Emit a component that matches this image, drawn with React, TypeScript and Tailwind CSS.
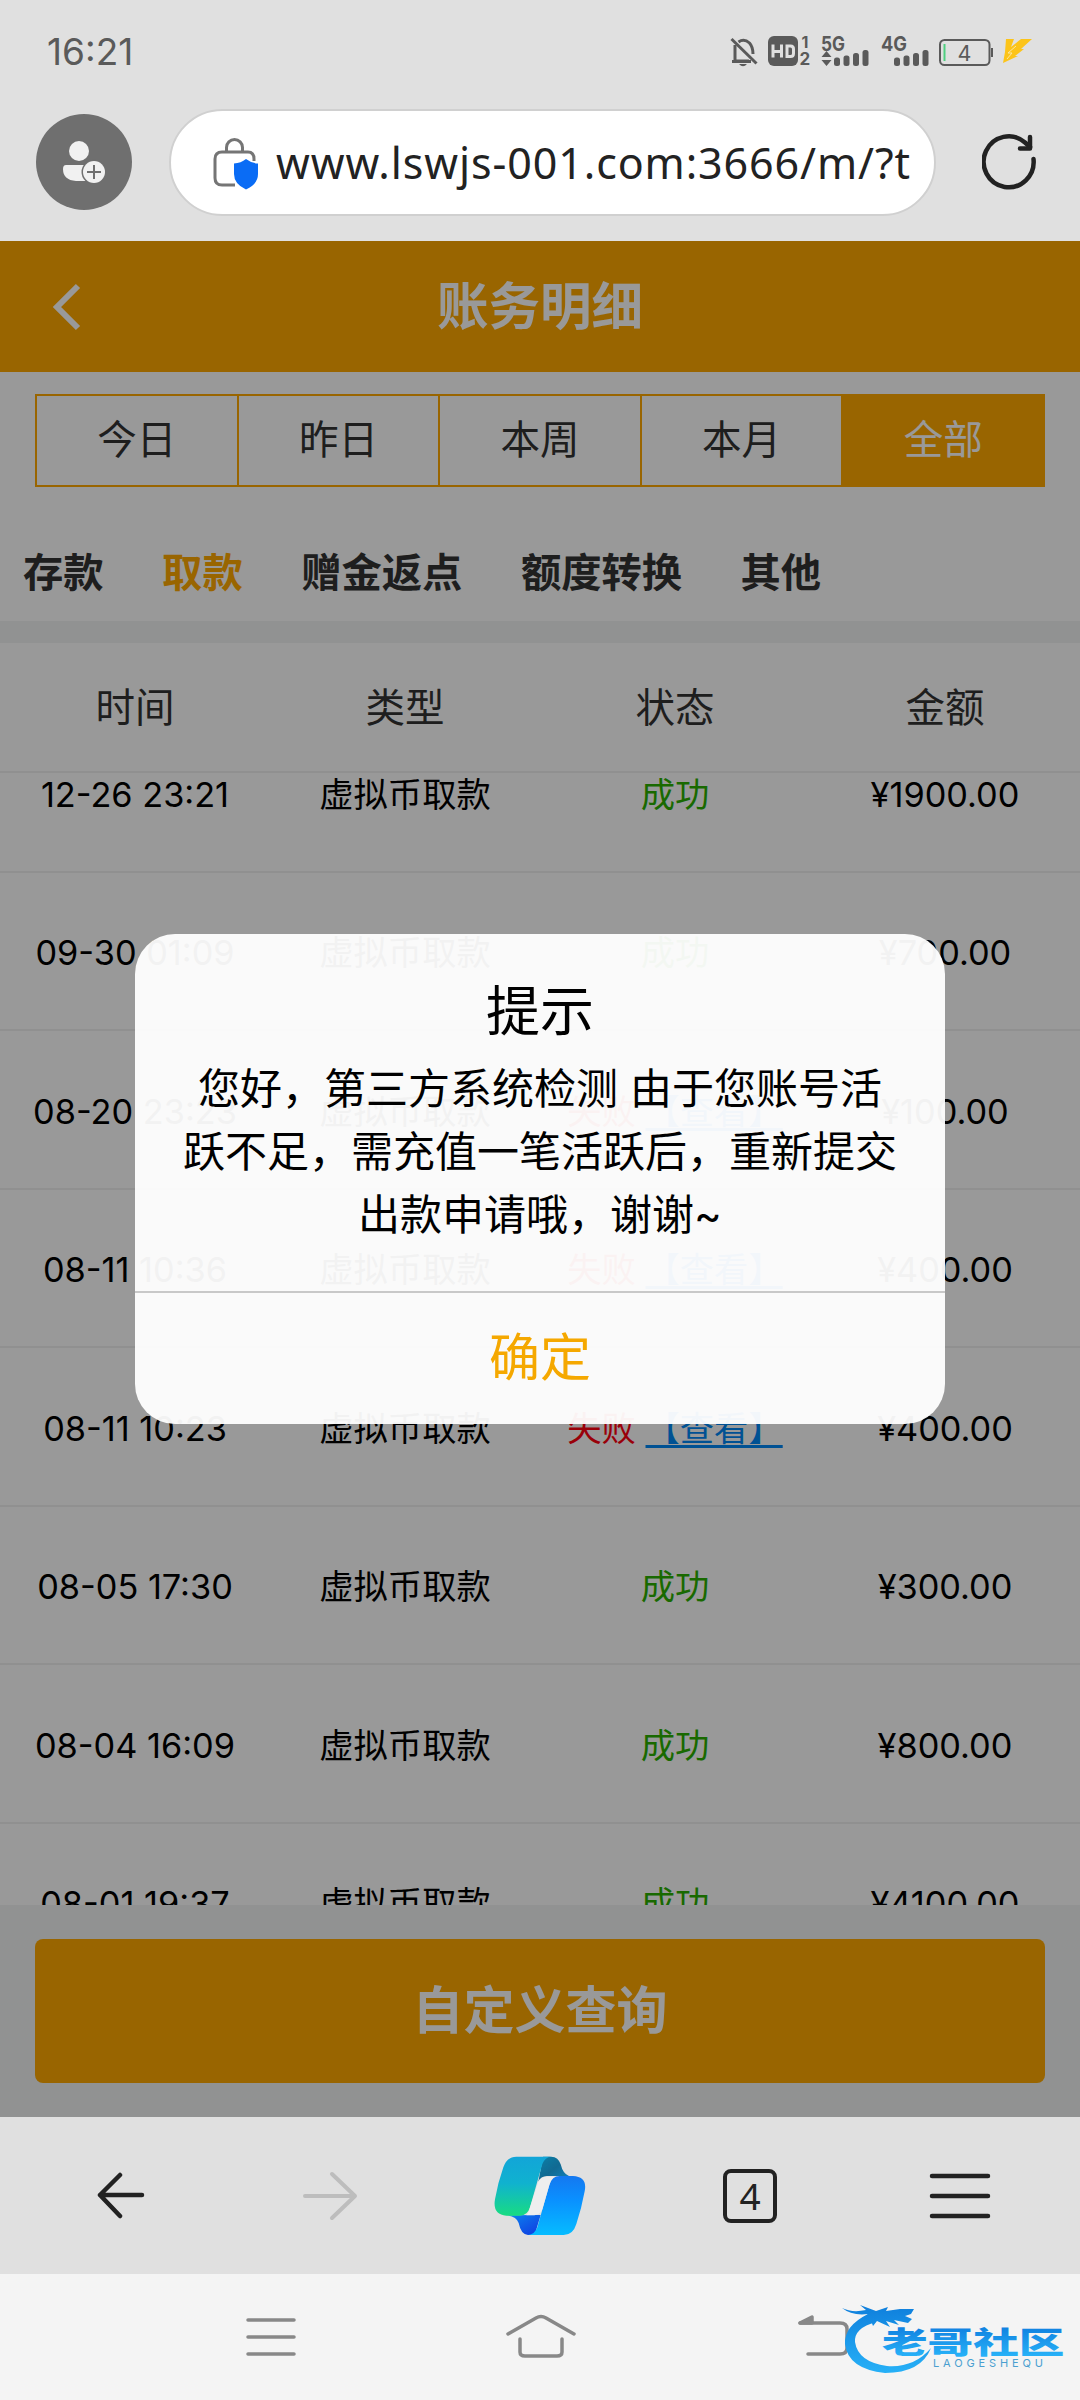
const periods = ['今日', '昨日', '本周', '本月', '全部'];
const categories = ['存款', '取款', '赠金返点', '额度转换', '其他'];
const columns = ['时间', '类型', '状态', '金额'];

type RecordRow = { time: string; ok: boolean; amount: string };

const records: RecordRow[] = [
  { time: '12-26 23:21', ok: true, amount: '¥1900.00' },
  { time: '09-30 01:09', ok: true, amount: '¥700.00' },
  { time: '08-20 23:23', ok: false, amount: '¥100.00' },
  { time: '08-11 10:36', ok: false, amount: '¥400.00' },
  { time: '08-11 10:23', ok: false, amount: '¥400.00' },
  { time: '08-05 17:30', ok: true, amount: '¥300.00' },
  { time: '08-04 16:09', ok: true, amount: '¥800.00' },
  { time: '08-01 19:37', ok: true, amount: '¥4100.00' },
];

function StatusIcons() {
  return (
    <svg width="310" height="40" viewBox="725 32 310 40" fill="#5a5a5a">
      {/* Muted bell */}
      <g fill="none" stroke="#5a5a5a" strokeWidth="3">
        <path d="M731.5 39 756.500 63.5" />
        <path d="M735 45V61H749M732 61.500H751M738.500 42Q744 38 749.500 43Q753 47 753 54" />
      </g>
      <path d="M739 64h8q-4 4.500-8 0z" />
      {/* HD badge */}
      <rect x="768" y="36" width="30" height="30" rx="6" />
      <path d="M773 44.500v13M781.500 44.500v13M773 51.500h8.500M787 46v10.500h3.500q3 0 3-3v-4.500q0-3-3-3z" fill="none" stroke="#e0e0e0" strokeWidth="3" />
      <g fontFamily="Inter, sans-serif" fontWeight="700">
        <text x="801.500" y="47.500" fontSize="16">1</text>
        <text x="799.500" y="65" fontSize="17">2</text>
        <text x="821" y="51" fontSize="20" textLength="24" lengthAdjust="spacingAndGlyphs">5G</text>
        <text x="881" y="51" fontSize="20" textLength="26" lengthAdjust="spacingAndGlyphs">4G</text>
      </g>
      <path d="M826.500 51l5 6h-10zM826.500 66l5-6h-10z" />
      <rect x="834" y="57.500" width="6" height="8.500" rx="2.500" />
      <rect x="843.500" y="55.500" width="6" height="10.500" rx="2.500" />
      <rect x="853" y="53" width="6" height="13" rx="2.500" />
      <rect x="862.500" y="50" width="6" height="16" rx="2.500" />
      <rect x="894" y="57.500" width="6" height="8.500" rx="2.500" />
      <rect x="903.500" y="55.500" width="6" height="10.500" rx="2.500" />
      <rect x="913" y="53" width="6" height="13" rx="2.500" />
      <rect x="922.500" y="50" width="6" height="16" rx="2.500" />
      {/* Battery */}
      <rect x="940" y="40" width="49.500" height="25" rx="4.500" fill="none" stroke="#5a5a5a" strokeWidth="2" />
      <rect x="991" y="48" width="2" height="9" />
      <rect x="943.500" y="44" width="2" height="17" fill="#4fcf80" />
      <text x="964.500" y="61" fontSize="21.500" textAnchor="middle" fontFamily="Inter, sans-serif">4</text>
      <path d="M1006 39H1014L1011 47 1021 39H1032L1021 49H1024L1015 56H1018L1003 63 1005 52Z" fill="#fcc419" />
      <path d="M1016 46 1008 53H1012L1007 59" fill="none" stroke="#fbe6a2" strokeWidth="1" />
    </svg>
  );
}

function AddressBar() {
  return (
    <div className="flex h-[141px] items-center pb-[17px]">
      <div className="ml-9 flex h-24 w-24 items-center justify-center rounded-full bg-[#6f6f6f]">
        <svg width="44" height="44" viewBox="0 0 44 44">
          <circle cx="17" cy="11" r="10" fill="#f1f1f1" />
          <path d="M4 25h26v16H14Q1 40 1 29q0-4 3-4z" fill="#f1f1f1" />
          <circle cx="32" cy="32" r="12.500" fill="#6f6f6f" />
          <circle cx="32" cy="32" r="11" fill="#f1f1f1" />
          <path d="M32 25v14M25 32h14" stroke="#6f6f6f" strokeWidth="2" />
        </svg>
      </div>
      <div className="ml-[37px] flex h-[107px] w-[767px] items-center rounded-full border-2 border-[#d0d0d0] bg-white">
        <svg className="mt-[3px] ml-[42px] shrink-0" width="46" height="52" viewBox="0 0 46 52">
          <g fill="none" stroke="#757575" strokeWidth="3">
            <path d="M13.500 14V9.500a8 8 0 0 1 16 0V14" />
            <path d="M22 47H9q-7 0-7-7V21q0-7 7-7h26q6 0 6 7v2" />
          </g>
          <path d="M33 21q5 4 12 4.500V36q0 10-12 15.500Q21 46 21 36V25.500Q28 25 33 21z" fill="#0a6cf5" />
        </svg>
        <span className="ml-[17px] font-['Noto_Sans'] text-[43px] leading-none tracking-[0.9px] whitespace-nowrap text-[#222]">
          www.lswjs-001.com:3666/m/?t
        </span>
      </div>
      <svg className="ml-[46px]" width="56" height="58" viewBox="0 0 56 58" fill="none" stroke="#222" strokeWidth="4.500" strokeLinecap="round" strokeLinejoin="round">
        <path d="M51.500 26A25 25.500 0 1 1 43 9.500L48 14" />
        <path d="M48 4v11.500H38" />
      </svg>
    </div>
  );
}

function RecordItem({ time, ok, amount }: RecordRow) {
  return (
    <div className="grid h-[158.500px] shrink-0 grid-cols-4 items-center border-b-2 border-[#f1f1f1] pt-1 text-center text-[34.300px] whitespace-nowrap text-black">
      <span>{time}</span>
      <span>虚拟币取款</span>
      {ok ? (
        <span className="text-[#2bb000]">成功</span>
      ) : (
        <span className="text-[#ff0010]">
          失败 <a className="text-[#0088f5] underline decoration-[3px] underline-offset-4">【查看】</a>
        </span>
      )}
      <span>{amount}</span>
    </div>
  );
}

function Dialog() {
  return (
    <div className="absolute top-[693px] left-[135px] flex h-[490px] w-[810px] flex-col rounded-[40px] bg-white/95 text-center text-black">
      <h2 className="mt-[43px] text-[54px] leading-[70px]">提示</h2>
      <p className="mt-[10px] text-[42px] leading-[63px] whitespace-nowrap">
        您好，第三方系统检测 由于您账号活
        <br />
        跃不足，需充值一笔活跃后，重新提交
        <br />
        出款申请哦，谢谢~
      </p>
      <button className="mt-auto h-[133px] border-t-2 border-[#c8c8c8] text-[51px] text-[#f5a800]">
        确定
      </button>
    </div>
  );
}

function CopilotLogo() {
  return (
    <svg width="92" height="80" viewBox="103 108 276 240">
      <defs>
        <linearGradient id="cpLeft" x1="0" y1="0" x2="0" y2="1">
          <stop offset="0" stopColor="#12a5d8" />
          <stop offset=".45" stopColor="#10b2cf" />
          <stop offset="1" stopColor="#18dc82" />
        </linearGradient>
        <linearGradient id="cpRight" x1="0" y1="0" x2="0" y2="1">
          <stop offset="0" stopColor="#1478f0" />
          <stop offset=".4" stopColor="#0a90ff" />
          <stop offset="1" stopColor="#06bcff" />
        </linearGradient>
        <linearGradient id="cpTop" x1="0" y1="0" x2="1" y2="1">
          <stop offset="0" stopColor="#0a80a8" />
          <stop offset=".5" stopColor="#116a92" />
          <stop offset="1" stopColor="#1384c0" />
        </linearGradient>
        <linearGradient id="cpBottom" x1="0" y1="0" x2="1" y2="1">
          <stop offset="0" stopColor="#0b86f0" />
          <stop offset="1" stopColor="#1038e0" />
        </linearGradient>
      </defs>
      <path d="M250 110H275Q296 111 303 133Q310 162 328 168H262Q243 169 236 185Z" fill="url(#cpTop)" />
      <path d="M140 286Q170 289 177 309Q184 344 205 345H225L243 285Z" fill="url(#cpBottom)" />
      <path d="M170 110H275Q256 111 248 132L211 262Q203 287 182 287H140Q98 284 106 238Q114 190 131 142Q142 110 170 110Z" fill="url(#cpLeft)" />
      <path d="M310 168H340Q384 170 375 214Q366 264 350 312Q340 345 312 345H205Q225 344 233 322L269 195Q277 168 300 168Z" fill="url(#cpRight)" />
      <path d="M236 185Q243 170 262 170H285Q274 176 269 195L248 268Q242 284 224 286H200Q207 280 211 262Z" fill="#eee" />
    </svg>
  );
}

function BrowserToolbar() {
  return (
    <div className="flex h-[157px] shrink-0 items-center bg-[#e0e0e0]">
      <svg className="ml-[95px]" width="50" height="48" viewBox="0 0 50 48" fill="none" stroke="#222" strokeWidth="4.500" strokeLinecap="round" strokeLinejoin="round">
        <path d="M47 23H5M25 3 5 23l20 21" />
      </svg>
      <svg className="ml-[157px]" width="56" height="50" viewBox="0 0 56 50" fill="none" stroke="#bdbdbd" strokeWidth="4" strokeLinecap="round" strokeLinejoin="round">
        <path d="M3 25h50M30 3l23 22-23 22" />
      </svg>
      <div className="ml-[136px]">
        <CopilotLogo />
      </div>
      <div className="ml-[137px] flex h-[54px] w-[54px] items-center justify-center rounded-lg border-4 border-[#222] font-['Noto_Sans'] text-[37px] text-[#222]">
        4
      </div>
      <svg className="ml-[152px]" width="62" height="46" viewBox="0 0 62 46" stroke="#222" strokeWidth="4.500" strokeLinecap="round">
        <path d="M3 3h56M3 23h56M3 43h56" />
      </svg>
    </div>
  );
}

function Watermark() {
  return (
    <svg className="absolute top-[22px] left-[838px]" width="230" height="90" viewBox="838 2296 230 90">
      <defs>
        <linearGradient id="wm" x1="0" y1="2305" x2="0" y2="2375" gradientUnits="userSpaceOnUse">
          <stop offset="0" stopColor="#0f7fdc" />
          <stop offset="1" stopColor="#27b2f8" />
        </linearGradient>
        <linearGradient id="wmText" x1="0" y1="-26" x2="0" y2="4" gradientUnits="userSpaceOnUse">
          <stop offset="0" stopColor="#1080e0" />
          <stop offset="1" stopColor="#27b2f8" />
        </linearGradient>
      </defs>
      <g fill="url(#wm)">
        <path d="M868 2314Q844 2326 845 2344Q848 2369 885 2373Q921 2373 931 2348Q914 2368 887 2366Q858 2362 855 2342Q854 2328 876 2322Z" />
        <path d="M842 2308Q852 2313 866 2310L860 2305L876 2311L888 2307L886 2311L900 2309L914 2309L911 2314L905 2316L912 2319L908 2323L894 2320L899 2325L886 2321L890 2327L877 2321L873 2326L870 2318L862 2321L868 2314Q852 2316 842 2308Z" />
      </g>
      <text transform="translate(882 2352.500) scale(1.520 1)" fontSize="30" fontWeight="900" fill="url(#wmText)" fontFamily='"Noto Sans CJK SC", sans-serif'>
        老哥社区
      </text>
      <text x="933" y="2367" fontSize="11" fill="#4a9fd0" fontFamily="Inter, sans-serif" textLength="110">
        LAOGESHEQU
      </text>
    </svg>
  );
}

function SystemNav() {
  return (
    <div className="relative flex h-[126px] shrink-0 bg-[#f4f4f4]">
      <svg width="1080" height="126" viewBox="0 2274 1080 126" fill="none" stroke="#888" strokeWidth="3.500" strokeLinecap="round" strokeLinejoin="round">
        <path d="M248 2320h46M248 2337h46M248 2354h46" />
        <path d="M508 2334 536 2318Q541 2315 546 2318L574 2334M520 2339V2352Q520 2356 525 2356H557Q562 2356 562 2352V2339" />
        <path d="M800 2323H840Q847 2323 847 2329V2348Q847 2354 840 2354H808" />
        <path d="M800 2323l12-6v6z" fill="#888" />
      </svg>
      <Watermark />
    </div>
  );
}

export default function App() {
  return (
    <div className="flex h-[2400px] w-[1080px] flex-col overflow-hidden bg-[#e0e0e0] font-[Inter,'Noto_Sans_CJK_SC',sans-serif]">
      {/* Status bar */}
      <div className="flex h-[100px] shrink-0 items-center justify-between pt-1 pr-[45px] pl-[47px]">
        <span className="text-[37px] text-[#5a5a5a]">16:21</span>
        <StatusIcons />
      </div>
      <AddressBar />

      {/* Web page */}
      <main className="relative flex h-[1876px] shrink-0 flex-col overflow-hidden bg-white">
        <header className="flex h-[131px] shrink-0 items-center bg-[#ffa900]">
          <svg className="ml-[50px]" width="32" height="50" viewBox="0 0 32 50" fill="none" stroke="#fff" strokeWidth="6">
            <path d="M28 4 7 25l21 21" />
          </svg>
          <h1 className="mr-[82px] flex-1 text-center text-[51.500px] font-bold text-white">账务明细</h1>
        </header>

        <div className="mx-[35px] mt-[22px] flex h-[93px] shrink-0 border-2 border-[#ffa900]">
          {periods.map((p) => (
            <div
              key={p}
              className="flex flex-1 items-center justify-center border-r-2 border-[#ffa900] text-[39.500px] text-[#333] last:border-r-0 last:bg-[#ffa900] last:text-white"
            >
              {p}
            </div>
          ))}
        </div>

        <nav className="flex h-[134px] shrink-0 items-center gap-[58.500px] pt-[38px] pl-[23px] text-[40.300px] font-bold text-[#333]">
          {categories.map((c) => (
            <span key={c} className={c === '取款' ? 'text-[#ffa900]' : ''}>{c}</span>
          ))}
        </nav>
        <div className="h-[22px] shrink-0 bg-[#f2f4f3]" />

        <div className="grid h-[130px] shrink-0 grid-cols-4 items-center border-b-2 border-[#f1f1f1] pt-1 text-center text-[39.500px] text-[#333]">
          {columns.map((c) => (
            <span key={c}>{c}</span>
          ))}
        </div>

        {/* List is scrolled part of a row */}
        <div className="flex h-[1132px] shrink-0 flex-col overflow-hidden">
          <div className="-mt-[59px] flex flex-col">
            {records.map((r) => (
              <RecordItem key={r.time} {...r} />
            ))}
          </div>
        </div>

        <div className="flex flex-1 items-start bg-[#f2f4f3] px-[35px] pt-[34px]">
          <button className="h-[144px] w-full rounded-lg bg-[#ffa900] text-[51px] font-bold text-white">
            自定义查询
          </button>
        </div>

        <div className="absolute inset-0 bg-black/40" />
        <Dialog />
      </main>

      <BrowserToolbar />
      <SystemNav />
    </div>
  );
}
